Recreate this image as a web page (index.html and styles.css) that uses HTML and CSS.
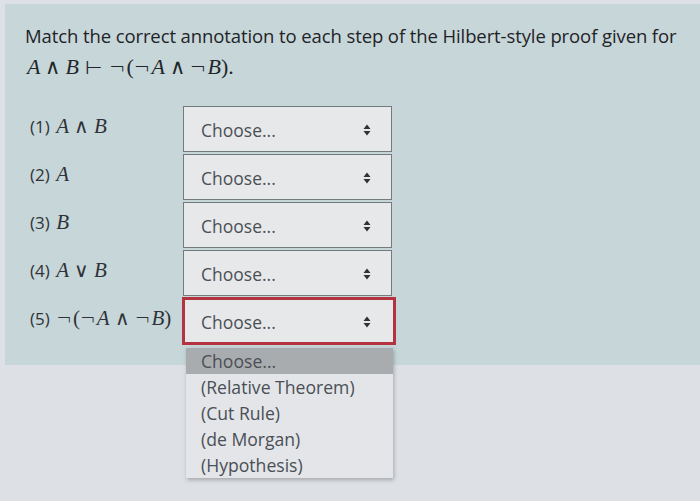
FILE: index.html
```html
<!DOCTYPE html>
<html>
<head>
<meta charset="utf-8">
<link rel="stylesheet" href="styles.css">
</head>
<body>
<div class="page">
  <div class="panel">
    <div class="q-text">Match the correct annotation to each step of the Hilbert-style proof given for</div>
    <div class="q-formula"><i>A</i><span class="bin">∧</span><i>B</i><span class="rel">⊢</span><span class="op">¬</span>(<span class="op">¬</span><i>A</i><span class="bin">∧</span><span class="op">¬</span><i>B</i>).</div>
    <div class="rows">
      <div class="row">
        <div class="label"><span class="num">(1)</span> <span class="math"><i>A</i><span class="bin">∧</span><i>B</i></span></div>
        <div class="select"><span>Choose...</span><svg class="arrows" width="8" height="12" viewBox="0 0 8 12"><path d="M4 0.5 L7.5 5 L0.5 5 Z M0.5 7 L7.5 7 L4 11.5 Z" fill="#2e3236"/></svg></div>
      </div>
      <div class="row">
        <div class="label"><span class="num">(2)</span> <span class="math"><i>A</i></span></div>
        <div class="select"><span>Choose...</span><svg class="arrows" width="8" height="12" viewBox="0 0 8 12"><path d="M4 0.5 L7.5 5 L0.5 5 Z M0.5 7 L7.5 7 L4 11.5 Z" fill="#2e3236"/></svg></div>
      </div>
      <div class="row">
        <div class="label"><span class="num">(3)</span> <span class="math"><i>B</i></span></div>
        <div class="select"><span>Choose...</span><svg class="arrows" width="8" height="12" viewBox="0 0 8 12"><path d="M4 0.5 L7.5 5 L0.5 5 Z M0.5 7 L7.5 7 L4 11.5 Z" fill="#2e3236"/></svg></div>
      </div>
      <div class="row">
        <div class="label"><span class="num">(4)</span> <span class="math"><i>A</i><span class="bin">∨</span><i>B</i></span></div>
        <div class="select"><span>Choose...</span><svg class="arrows" width="8" height="12" viewBox="0 0 8 12"><path d="M4 0.5 L7.5 5 L0.5 5 Z M0.5 7 L7.5 7 L4 11.5 Z" fill="#2e3236"/></svg></div>
      </div>
      <div class="row">
        <div class="label"><span class="num">(5)</span> <span class="math"><span class="op">¬</span>(<span class="op">¬</span><i>A</i><span class="bin">∧</span><span class="op">¬</span><i>B</i>)</span></div>
        <div class="select focused"><span>Choose...</span><svg class="arrows" width="8" height="12" viewBox="0 0 8 12"><path d="M4 0.5 L7.5 5 L0.5 5 Z M0.5 7 L7.5 7 L4 11.5 Z" fill="#2e3236"/></svg></div>
      </div>
    </div>
  </div>
  <ul class="dropdown">
    <li class="hl">Choose...</li>
    <li>(Relative Theorem)</li>
    <li>(Cut Rule)</li>
    <li>(de Morgan)</li>
    <li>(Hypothesis)</li>
  </ul>
</div>
</body>
</html>
```
FILE: styles.css
```css
html, body {
  margin: 0;
  padding: 0;
  background: #dde0e4;
  height: 100%;
}
.page {
  position: relative;
  padding-top: 4px;
  font-family: "Open Sans", "Noto Sans", sans-serif;
  color: #2a2e33;
}
.panel {
  margin-left: 5px;
  background: #c7d6d9;
  padding: 20px 20px 21px 20px;
}
.q-text {
  font-size: 18.5px;
  line-height: 24px;
  letter-spacing: -0.1px;
  color: #1f2327;
}
.q-formula {
  font-family: "Liberation Serif", "DejaVu Serif", serif;
  font-size: 22px;
  line-height: 28px;
  margin-top: 5px;
  margin-left: 2px;
  color: #22262b;
}
.bin, .rel {
  font-family: "DejaVu Sans", sans-serif;
  font-weight: 200;
  font-size: 0.95em;
  margin: 0 5px;
}
.rel {
  font-size: 0.9em;
  margin: 0 7px 0 6px;
}
.op {
  font-family: "DejaVu Sans", sans-serif;
  font-weight: 200;
  font-size: 0.9em;
  margin-right: 1px;
}
.rows {
  margin-top: 24px;
  display: flex;
  flex-direction: column;
  gap: 2px;
}
.row {
  display: flex;
  align-items: flex-start;
}
.label {
  width: 158px;
  padding-top: 8px;
  padding-left: 5px;
  box-sizing: border-box;
  font-size: 17px;
  line-height: 24px;
  color: #2f3338;
  white-space: nowrap;
}
.math {
  font-family: "Liberation Serif", "DejaVu Serif", serif;
  font-size: 21px;
  margin-left: 2px;
}
.select {
  box-sizing: border-box;
  width: 209px;
  height: 46px;
  border: 1px solid #737a7e;
  background: #e6e8ea;
  display: flex;
  align-items: center;
  justify-content: space-between;
  padding: 2px 20px 0 17px;
  font-size: 17.5px;
  color: #4b5055;
}
.select.focused {
  border: 2px solid #b3343f;
  box-shadow: 0 0 0 1px #b3343f;
  width: 212px;
  padding-left: 16px;
  padding-right: 22px;
}
.arrows {
  display: block;
}
.dropdown {
  position: absolute;
  left: 186px;
  top: 348px;
  width: 207px;
  margin: 0;
  padding: 0;
  list-style: none;
  background: #e3e5e9;
  box-shadow: 1px 2px 4px rgba(0, 0, 0, 0.25);
}
.dropdown li {
  height: 26px;
  line-height: 26px;
  padding-left: 15px;
  font-size: 17.6px;
  color: #4a4f55;
  white-space: nowrap;
}
.dropdown li.hl {
  background: #a9acaf;
}
```
